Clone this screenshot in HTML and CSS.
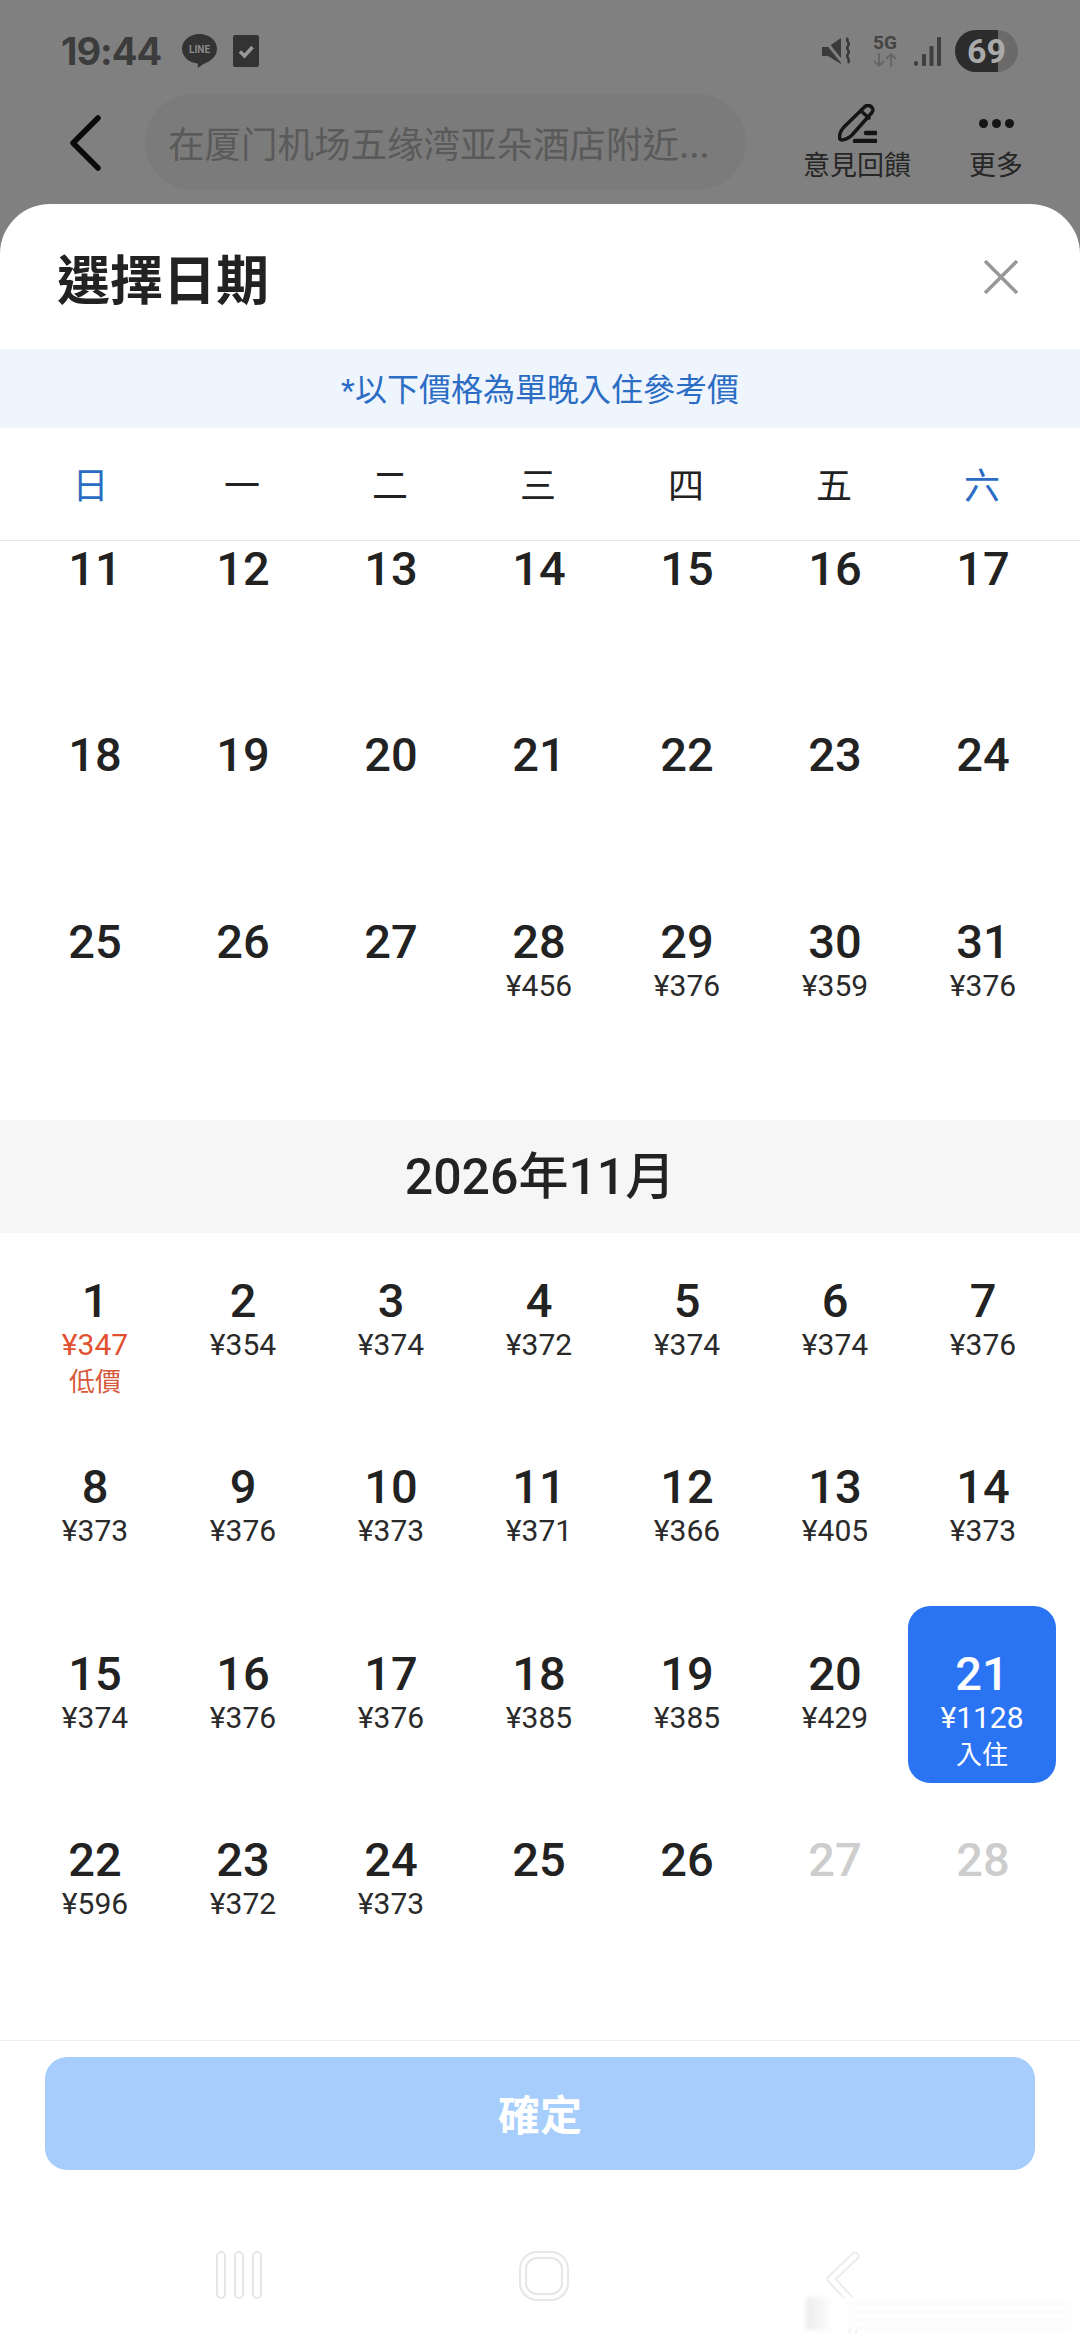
FILE: index.html
```html
<!DOCTYPE html>
<html lang="zh-Hant">
<head>
    <meta charset="UTF-8">
    <meta name="viewport" content="width=device-width, initial-scale=1.0">
    <title>選擇日期</title>
    <link rel="stylesheet" href="styles.css">
</head>
<body>
    <div class="page">
        <div class="status-bar">
            <div class="status-left">
                <span class="clock">19:44</span>
                <svg class="icon-line" viewBox="0 0 35 34"><path d="M17.500 0C7.800 0 0 6.500 0 14.700c0 7.400 6.300 13.500 14.800 14.600.7.100 1.200.5 1.100 2l-.3 2.700 6-4c7.500-3 13.400-7.800 13.400-15.300C35 6.500 27.200 0 17.500 0z"/><text x="17.500" y="19" text-anchor="middle">LINE</text></svg>
                <svg class="icon-check" viewBox="0 0 26 32"><rect width="26" height="32" rx="2"/><path d="M7 16.500l4.500 4.500 8-9" /></svg>
            </div>
            <div class="status-right">
                <svg class="icon-mute" viewBox="0 0 30 28"><path class="fill" d="M0 10h6L19 1v26L6 19H0z"/><path class="cut" d="M1 1l20 25"/><path class="wave" d="M26 1c-3 3 3 5 0 8s3 5 0 8 3 5 0 9"/></svg>
                <div class="net">
                    <span>5G</span>
                    <svg viewBox="0 0 24 14"><path d="M6 0v13M1 8l5 5 5-5M18 14V1M13 6l5-5 5 5"/></svg>
                </div>
                <svg class="icon-signal" viewBox="0 0 27 29"><rect x="0" y="24" width="4" height="5" rx="2"/><rect x="8" y="17" width="4" height="12" rx="1"/><rect x="15.500" y="9" width="4" height="20" rx="1"/><rect x="23" y="0" width="4" height="29" rx="1"/></svg>
                <div class="battery"><span class="battery-level"></span><span class="battery-num">69</span></div>
            </div>
        </div>

        <div class="toolbar">
            <svg class="icon-back" viewBox="0 0 31 56"><path d="M28 3L3 28l25 25"/></svg>
            <div class="search-pill">在厦门机场五缘湾亚朵酒店附近...</div>
            <div class="tool tool-feedback">
                <svg viewBox="0 0 39 39"><path d="M27 2.500c2-1.500 4-1.500 6 0 2 1.500 2.500 4 1 6L14 31c-3 3-6 4.500-10 5-1.500 0-2.500-1-2.500-2.500 0-4 1.500-7.500 4.500-10.500z"/><path d="M23 7l8 7"/><path class="thick" d="M17 37h21M28 29h10"/></svg>
                <span>意見回饋</span>
            </div>
            <div class="tool tool-more">
                <div class="dots"><i></i><i></i><i></i></div>
                <span>更多</span>
            </div>
        </div>

        <div class="sheet">
            <div class="sheet-head">
                <h1>選擇日期</h1>
                <svg class="icon-close" viewBox="0 0 34 34"><path d="M1 1l32 32M33 1L1 33"/></svg>
            </div>
            <div class="notice">*以下價格為單晚入住參考價</div>
            <div class="week-row">
                <span class="weekend">日</span><span>一</span><span>二</span><span>三</span><span>四</span><span>五</span><span class="weekend">六</span>
            </div>

            <div class="scroll-area">
                <div class="month-grid scrolled">
                    <div class="day"><b>11</b></div>
                    <div class="day"><b>12</b></div>
                    <div class="day"><b>13</b></div>
                    <div class="day"><b>14</b></div>
                    <div class="day"><b>15</b></div>
                    <div class="day"><b>16</b></div>
                    <div class="day"><b>17</b></div>
                    <div class="day"><b>18</b></div>
                    <div class="day"><b>19</b></div>
                    <div class="day"><b>20</b></div>
                    <div class="day"><b>21</b></div>
                    <div class="day"><b>22</b></div>
                    <div class="day"><b>23</b></div>
                    <div class="day"><b>24</b></div>
                    <div class="day"><b>25</b></div>
                    <div class="day"><b>26</b></div>
                    <div class="day"><b>27</b></div>
                    <div class="day"><b>28</b><span>¥456</span></div>
                    <div class="day"><b>29</b><span>¥376</span></div>
                    <div class="day"><b>30</b><span>¥359</span></div>
                    <div class="day"><b>31</b><span>¥376</span></div>
                </div>

                <div class="month-title">2026年11月</div>

                <div class="month-grid">
                    <div class="day low"><b>1</b><span>¥347</span><em>低價</em></div>
                    <div class="day"><b>2</b><span>¥354</span></div>
                    <div class="day"><b>3</b><span>¥374</span></div>
                    <div class="day"><b>4</b><span>¥372</span></div>
                    <div class="day"><b>5</b><span>¥374</span></div>
                    <div class="day"><b>6</b><span>¥374</span></div>
                    <div class="day"><b>7</b><span>¥376</span></div>
                    <div class="day"><b>8</b><span>¥373</span></div>
                    <div class="day"><b>9</b><span>¥376</span></div>
                    <div class="day"><b>10</b><span>¥373</span></div>
                    <div class="day"><b>11</b><span>¥371</span></div>
                    <div class="day"><b>12</b><span>¥366</span></div>
                    <div class="day"><b>13</b><span>¥405</span></div>
                    <div class="day"><b>14</b><span>¥373</span></div>
                    <div class="day"><b>15</b><span>¥374</span></div>
                    <div class="day"><b>16</b><span>¥376</span></div>
                    <div class="day"><b>17</b><span>¥376</span></div>
                    <div class="day"><b>18</b><span>¥385</span></div>
                    <div class="day"><b>19</b><span>¥385</span></div>
                    <div class="day"><b>20</b><span>¥429</span></div>
                    <div class="day selected"><b>21</b><span>¥1128</span><em>入住</em></div>
                    <div class="day"><b>22</b><span>¥596</span></div>
                    <div class="day"><b>23</b><span>¥372</span></div>
                    <div class="day"><b>24</b><span>¥373</span></div>
                    <div class="day"><b>25</b></div>
                    <div class="day"><b>26</b></div>
                    <div class="day disabled"><b>27</b></div>
                    <div class="day disabled"><b>28</b></div>
                </div>
            </div>

            <div class="footer">
                <button class="confirm">確定</button>
            </div>

            <div class="nav-bar">
                <svg class="nav-recent" viewBox="0 0 46 48"><rect x="1" y="1" width="8" height="46" rx="4"/><rect x="19" y="1" width="8" height="46" rx="4"/><rect x="37" y="1" width="8" height="46" rx="4"/></svg>
                <svg class="nav-home" viewBox="0 0 50 50"><rect x="1" y="1" width="48" height="48" rx="17"/><rect x="7" y="7" width="36" height="36" rx="11"/></svg>
                <svg class="nav-back" viewBox="0 0 36 82"><path class="outer" d="M30 5L6 28l22 24v28"/><path class="inner" d="M30 5L6 28l22 24v28"/></svg>
                <div class="watermark"></div>
            </div>
        </div>
    </div>
</body>
</html>
```

FILE: styles.css
```css
* {
    margin: 0;
    padding: 0;
    box-sizing: border-box;
}

body {
    width: 1080px;
    height: 2340px;
    overflow: hidden;
    background-color: #808080;
    font-family: Roboto, "Noto Sans CJK TC", sans-serif;
    color: #222;
}

.page {
    height: 2340px;
    display: flex;
    flex-direction: column;
}

/* status bar */
.status-bar {
    height: 94px;
    padding: 30px 62px 0 61px;
    display: flex;
    justify-content: space-between;
    align-items: flex-start;
    flex-shrink: 0;
}

.status-left {
    display: flex;
    align-items: center;
    height: 42px;
}

.clock {
    font-family: Inter, Roboto, sans-serif;
    font-size: 38px;
    font-weight: 700;
    letter-spacing: -1px;
    color: #3c3c3c;
    width: 121px;
}

.icon-line {
    width: 35px;
    height: 34px;
    fill: #333;
}

.icon-line text {
    font-family: Roboto, sans-serif;
    font-size: 10px;
    font-weight: 700;
    fill: #8a8a8a;
}

.icon-check {
    width: 26px;
    height: 32px;
    margin-left: 16px;
}

.icon-check rect {
    fill: #333;
}

.icon-check path {
    fill: none;
    stroke: #9a9a9a;
    stroke-width: 3.500;
}

.status-right {
    display: flex;
    align-items: center;
    height: 42px;
}

.icon-mute {
    width: 30px;
    height: 28px;
    margin-right: 21px;
}

.icon-mute .fill {
    fill: #3a3a3a;
}

.icon-mute .cut {
    stroke: #808080;
    stroke-width: 3;
}

.icon-mute .wave {
    fill: none;
    stroke: #3a3a3a;
    stroke-width: 2.500;
}

.net {
    width: 24px;
    margin-right: 17px;
    display: flex;
    flex-direction: column;
    align-items: center;
    gap: 3px;
}

.net span {
    font-size: 19px;
    line-height: 15px;
    font-weight: 700;
    color: #444;
}

.net svg {
    width: 24px;
    height: 14px;
    fill: none;
    stroke: #666;
    stroke-width: 2;
}

.icon-signal {
    width: 27px;
    height: 29px;
    fill: #3f3f3f;
    margin-right: 14px;
}

.battery {
    position: relative;
    width: 63px;
    height: 42px;
    border-radius: 21px;
    background-color: #6a6a6a;
    overflow: hidden;
    display: flex;
    justify-content: center;
    align-items: center;
}

.battery-level {
    position: absolute;
    left: 0;
    top: 0;
    bottom: 0;
    width: 43px;
    background-color: #2c2c2c;
}

.battery-num {
    position: relative;
    font-size: 34px;
    font-weight: 700;
    color: #aaa;
}

/* toolbar */
.toolbar {
    height: 110px;
    display: flex;
    align-items: flex-start;
    flex-shrink: 0;
}

.icon-back {
    width: 31px;
    height: 56px;
    margin: 21px 44px 0 70px;
    fill: none;
    stroke: #0a0a0a;
    stroke-width: 5.500;
    stroke-linecap: round;
    stroke-linejoin: round;
}

.search-pill {
    width: 601px;
    height: 96px;
    border-radius: 48px;
    background-color: #7b7b7b;
    padding-left: 23px;
    font-family: "Noto Sans CJK SC", sans-serif;
    font-size: 36.500px;
    line-height: 97px;
    color: #5a5a5a;
    white-space: nowrap;
    overflow: hidden;
}

.tool {
    display: flex;
    flex-direction: column;
    align-items: center;
    font-size: 27px;
    line-height: 34px;
    color: #262626;
    white-space: nowrap;
}

.tool-feedback {
    width: 106px;
    margin-left: 58px;
    padding-top: 10px;
}

.tool-feedback svg {
    width: 39px;
    height: 39px;
    margin-bottom: 6px;
    fill: none;
    stroke: #151515;
    stroke-width: 3.500;
    stroke-linecap: round;
    stroke-linejoin: round;
}

.tool-feedback .thick {
    stroke-width: 4.500;
}

.tool-more {
    width: 54px;
    margin-left: 59px;
    padding-top: 10px;
}

.dots {
    height: 39px;
    margin-bottom: 6px;
    display: flex;
    gap: 4px;
    align-items: center;
    padding-bottom: 1px;
}

.dots i {
    width: 9px;
    height: 9px;
    border-radius: 50%;
    background-color: #151515;
}

/* sheet */
.sheet {
    flex: 1;
    min-height: 0;
    background-color: #fff;
    border-radius: 50px 50px 0 0;
    display: flex;
    flex-direction: column;
}

.sheet-head {
    height: 145px;
    padding: 0 62px 0 57px;
    display: flex;
    justify-content: space-between;
    align-items: center;
    flex-shrink: 0;
}

.sheet-head h1 {
    font-size: 53px;
    font-weight: 700;
    color: #222;
}

.icon-close {
    width: 34px;
    height: 34px;
    fill: none;
    stroke: #989898;
    stroke-width: 3.500;
}

.notice {
    height: 79px;
    flex-shrink: 0;
    background-color: #eff5fc;
    color: #2b6cc4;
    font-size: 32px;
    line-height: 82px;
    text-align: center;
}

.week-row {
    height: 113px;
    flex-shrink: 0;
    padding: 0 24px 2px 20px;
    display: grid;
    grid-template-columns: repeat(7, 148px);
    align-items: center;
    justify-items: center;
    font-size: 36px;
    border-bottom: 1px solid #e8e8e8;
}

.week-row span:first-child {
    margin-right: 7px;
}

.weekend {
    color: #2b6cc4;
}

.scroll-area {
    flex: 1;
    min-height: 0;
    overflow: hidden;
}

.month-grid {
    display: grid;
    grid-template-columns: repeat(7, 148px);
    grid-auto-rows: 177px;
    row-gap: 9.400px;
    padding: 0 23px 70px 21px;
}

/* list is scrolled a bit, top of first row is under the week header */
.month-grid.scrolled {
    margin-top: -40px;
    padding-bottom: 69px;
}

.month-title {
    height: 113px;
    background-color: #f6f6f6;
    font-size: 50px;
    font-weight: 500;
    line-height: 115px;
    text-align: center;
    color: #222;
}

.day {
    padding-top: 45px;
    border-radius: 22px;
    display: flex;
    flex-direction: column;
    align-items: center;
}

.day b {
    font-size: 47px;
    font-weight: 500;
    line-height: 46px;
}

.day span {
    font-size: 30px;
    line-height: 42px;
    color: #2a2a2a;
}

.day em {
    font-style: normal;
    font-size: 26px;
    line-height: 32px;
}

.low span {
    color: #e2512f;
}

.low em {
    color: #d6593c;
}

.selected {
    margin: 0 1px 0 -1px;
    background-color: #2a74f4;
    color: #fff;
}

.selected span {
    color: #fff;
}

.disabled b {
    color: #cdcdcd;
}

/* bottom */
.footer {
    height: 130px;
    flex-shrink: 0;
    padding: 16px 45px 0;
    border-top: 1px solid #efefef;
}

.confirm {
    display: block;
    width: 100%;
    height: 113px;
    padding-bottom: 3px;
    border: none;
    border-radius: 22px;
    background-color: #a6cdfc;
    color: #fff;
    font-family: inherit;
    font-size: 42px;
    font-weight: 700;
}

.nav-bar {
    height: 170px;
    flex-shrink: 0;
    position: relative;
    display: flex;
    justify-content: space-between;
    align-items: flex-start;
    padding: 81px 219px 0 216px;
    overflow: hidden;
}

.nav-bar svg {
    fill: none;
    stroke: #e6e6e6;
    stroke-width: 2;
}

.nav-recent {
    width: 46px;
    height: 48px;
}

.nav-home {
    width: 50px;
    height: 50px;
}

.nav-back {
    width: 36px;
    height: 82px;
}

.nav-bar .outer {
    stroke: #ececec;
    stroke-width: 9;
    stroke-linecap: round;
    stroke-linejoin: round;
}

.nav-bar .inner {
    stroke: #fff;
    stroke-width: 5;
    stroke-linecap: round;
    stroke-linejoin: round;
}

/* faint watermark smear in the corner */
.watermark {
    position: absolute;
    left: 806px;
    top: 127px;
    width: 264px;
    height: 33px;
    filter: blur(2px);
    background:
        linear-gradient(90deg, #ececec 0, #f6f6f6 6%, #fff 10%, rgba(255, 255, 255, 0) 20%),
        repeating-linear-gradient(180deg, #fff 0, #fff 6px, #f6f6f6 6px, #f6f6f6 8px);
}
```
